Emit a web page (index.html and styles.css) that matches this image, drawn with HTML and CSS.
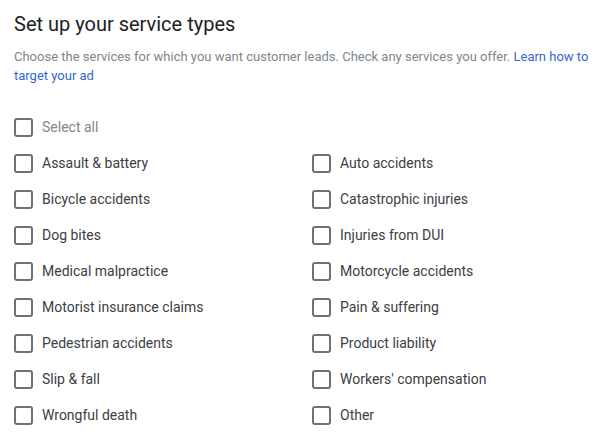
FILE: index.html
```html
<!DOCTYPE html>
<html>
<head>
<meta charset="utf-8">
<link rel="stylesheet" href="styles.css">
</head>
<body>
<div class="page">
  <h1 class="title">Set up your service types</h1>
  <p class="desc">Choose the services for which you want customer leads. Check any services you offer. <a class="link" href="#">Learn how to target your ad</a></p>
  <div class="list">
    <label class="item all"><span class="box"></span><span class="label muted">Select all</span></label>
    <label class="item"><span class="box"></span><span class="label">Assault &amp; battery</span></label>
    <label class="item"><span class="box"></span><span class="label">Auto accidents</span></label>
    <label class="item"><span class="box"></span><span class="label">Bicycle accidents</span></label>
    <label class="item"><span class="box"></span><span class="label">Catastrophic injuries</span></label>
    <label class="item"><span class="box"></span><span class="label">Dog bites</span></label>
    <label class="item"><span class="box"></span><span class="label">Injuries from DUI</span></label>
    <label class="item"><span class="box"></span><span class="label">Medical malpractice</span></label>
    <label class="item"><span class="box"></span><span class="label">Motorcycle accidents</span></label>
    <label class="item"><span class="box"></span><span class="label">Motorist insurance claims</span></label>
    <label class="item"><span class="box"></span><span class="label">Pain &amp; suffering</span></label>
    <label class="item"><span class="box"></span><span class="label">Pedestrian accidents</span></label>
    <label class="item"><span class="box"></span><span class="label">Product liability</span></label>
    <label class="item"><span class="box"></span><span class="label">Slip &amp; fall</span></label>
    <label class="item"><span class="box"></span><span class="label">Workers' compensation</span></label>
    <label class="item"><span class="box"></span><span class="label">Wrongful death</span></label>
    <label class="item"><span class="box"></span><span class="label">Other</span></label>
  </div>
</div>
</body>
</html>
```
FILE: styles.css
```css
html, body {
  margin: 0;
  padding: 0;
  background: #ffffff;
}
.page {
  width: 604px;
  height: 442px;
  box-sizing: border-box;
  padding: 11px 14px 0 14px;
  font-family: Roboto, "Liberation Sans", sans-serif;
  overflow: hidden;
}
.title {
  margin: 0;
  font-size: 20px;
  font-weight: 400;
  line-height: 26px;
  color: #202124;
}
.desc {
  margin: 10px 0 0 0;
  font-size: 13px;
  line-height: 19px;
  color: #80868b;
}
.link {
  color: #3367d6;
  text-decoration: none;
}
.list {
  margin-top: 24px;
  display: grid;
  grid-template-columns: 298px 1fr;
  grid-auto-rows: 36px;
}
.item {
  display: flex;
  align-items: center;
  gap: 9px;
  font-size: 14px;
  color: #3c4043;
}
.item.all {
  grid-column: 1 / -1;
}
.box {
  width: 19px;
  height: 19px;
  box-sizing: border-box;
  border: 2px solid #6f7175;
  border-radius: 3px;
  flex: none;
}
.muted {
  color: #80868b;
}
```
